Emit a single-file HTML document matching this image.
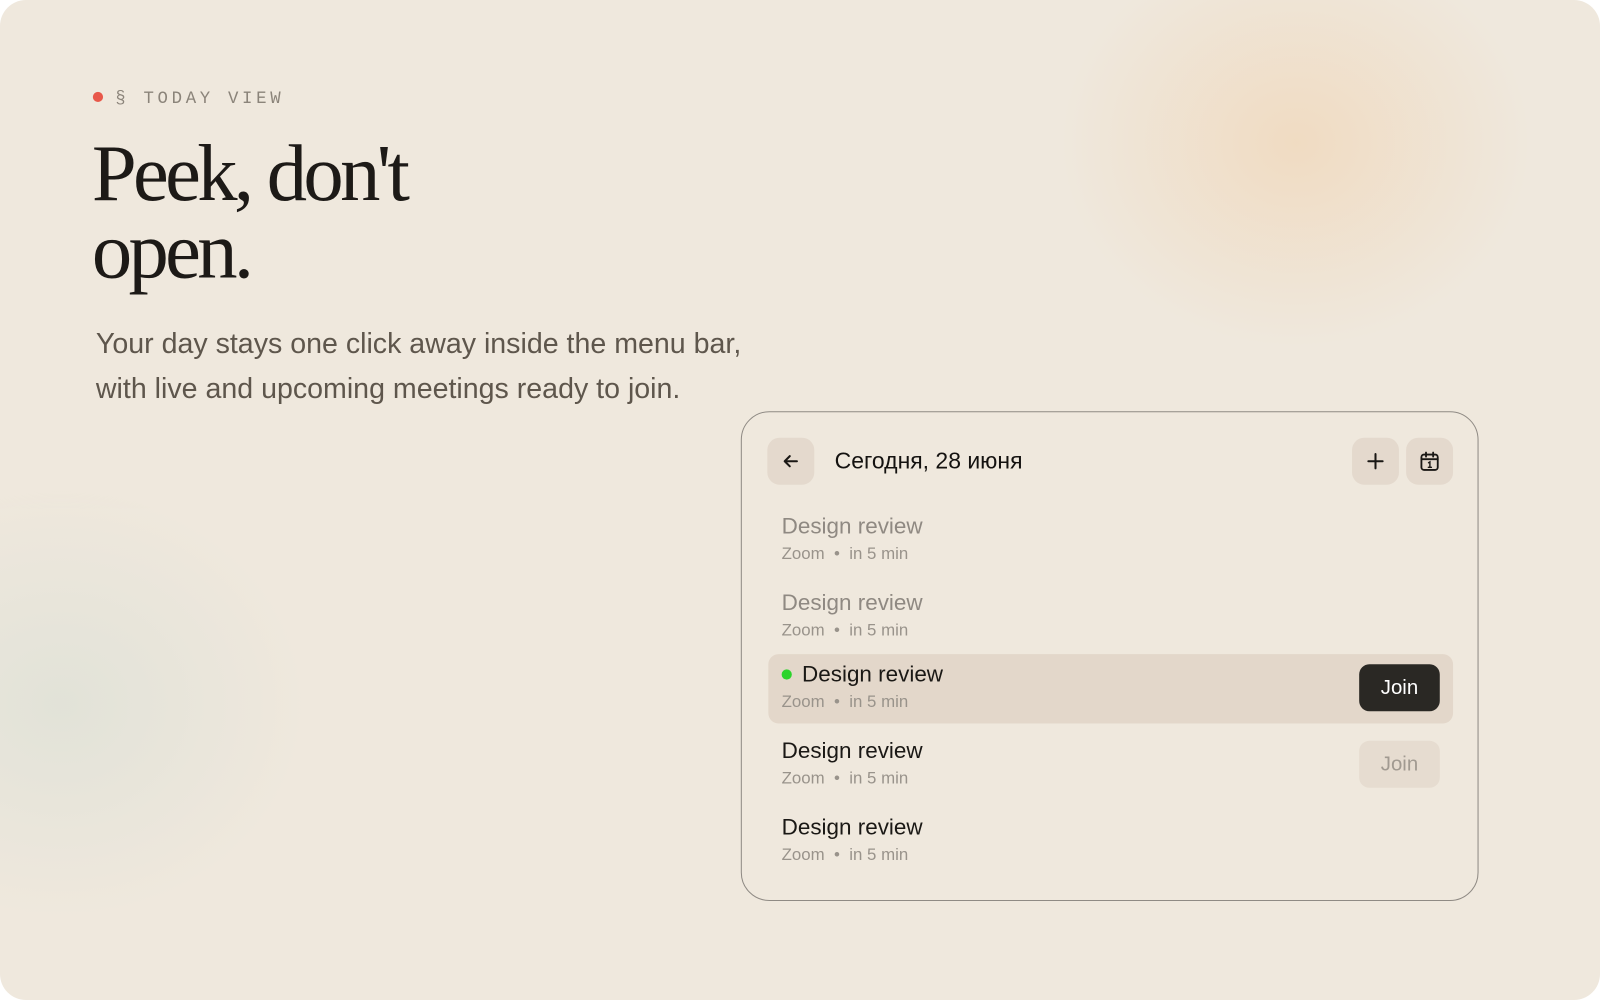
<!DOCTYPE html>
<html><head><meta charset="utf-8"><style>
*{margin:0;padding:0;box-sizing:border-box}
body{width:1600px;height:1000px;background:#fff;overflow:hidden;font-family:"Liberation Sans",sans-serif}
.page{position:absolute;left:0;top:0;width:1600px;height:1000px;border-radius:26px;background:#efe8dd;overflow:hidden}
.wrap{position:absolute;left:0;top:0;width:1568px;height:980px;transform:scale(1.0204);transform-origin:0 0}
.glow1{position:absolute;left:1040px;top:-60px;width:460px;height:400px;border-radius:50%;background:radial-gradient(closest-side,rgba(240,215,185,.75),rgba(240,215,185,0))}
.glow2{position:absolute;left:-180px;top:480px;width:480px;height:420px;border-radius:50%;background:radial-gradient(closest-side,rgba(220,224,214,.7),rgba(220,224,214,0))}
.eyebrow{position:absolute;left:91px;top:88px;font-family:"Liberation Mono",monospace;font-size:17px;letter-spacing:3.6px;color:#8b847a}
.eyebrow .dot{display:inline-block;width:10px;height:10px;border-radius:50%;background:#e8584a;margin-right:12px;vertical-align:1px}
h1{position:absolute;left:90px;top:133px;font-family:"Liberation Serif",serif;font-weight:400;font-size:79px;line-height:76px;letter-spacing:-3.6px;color:#1d1a17}
.lead{position:absolute;left:94px;top:315px;font-size:28px;line-height:44px;color:#5e564c}
.card{position:absolute;left:726px;top:403px;width:723px;height:480px;border:1px solid #8f8a84;border-radius:28px}
.btn{position:absolute;top:25px;width:46px;height:46px;border-radius:12px;background:#e4d9cd;display:flex;align-items:center;justify-content:center}
.title{position:absolute;left:91px;top:35px;font-size:22.5px;color:#141210}
.row{position:absolute;left:26px;width:671px;height:68px;border-radius:10px}
.row .t{position:absolute;left:13px;top:7px;font-size:22px;color:#1a1815}
.row .s{position:absolute;left:13px;top:38px;font-size:16.5px;color:#99938b}
.row.dim .t{color:#8f8982}
.join{position:absolute;right:13px;top:10px;width:79px;height:46px;border-radius:10px;font-size:20px;display:flex;align-items:center;justify-content:center}
</style></head><body><div class="page"><div class="wrap">
<div class="glow1"></div><div class="glow2"></div>
<div class="eyebrow"><span class="dot"></span>§ TODAY VIEW</div>
<h1>Peek, don't<br>open.</h1>
<div class="lead">Your day stays one click away inside the menu bar,<br>with live and upcoming meetings ready to join.</div>
<div class="card">
 <div class="btn" style="left:25px"><svg width="20" height="20" viewBox="0 0 20 20" fill="none" stroke="#1a1815" stroke-width="2" stroke-linecap="round" stroke-linejoin="round"><path d="M16 10H4M9 5l-5 5 5 5"/></svg></div>
 <div class="title">Сегодня, 28 июня</div>
 <div class="btn" style="left:598px"><svg width="20" height="20" viewBox="0 0 20 20" fill="none" stroke="#1a1815" stroke-width="2" stroke-linecap="round"><path d="M10 3v14M3 10h14"/></svg></div>
 <div class="btn" style="left:651px"><svg width="22" height="22" viewBox="0 0 22 22" fill="none" stroke="#1a1815" stroke-width="1.8" stroke-linecap="round"><rect x="3" y="4.5" width="16" height="15" rx="2.5"/><path d="M3 9h16M7.5 2.5v4M14.5 2.5v4"/><path d="M10 12.5l1.3-.8v5.3M9.8 17h3" stroke-width="1.4"/></svg></div>
 <div class="row dim" style="top:92px"><div class="t">Design review</div><div class="s">Zoom &nbsp;•&nbsp; in 5 min</div></div>
 <div class="row dim" style="top:167px"><div class="t">Design review</div><div class="s">Zoom &nbsp;•&nbsp; in 5 min</div></div>
 <div class="row" style="top:237px;background:#e3d7ca"><div class="t" style="left:33px"><span style="position:absolute;left:-20px;top:8px;width:10px;height:10px;border-radius:50%;background:#2bd42b"></span>Design review</div><div class="s">Zoom &nbsp;•&nbsp; in 5 min</div><div class="join" style="background:#2a2824;color:#fff">Join</div></div>
 <div class="row" style="top:312px"><div class="t">Design review</div><div class="s">Zoom &nbsp;•&nbsp; in 5 min</div><div class="join" style="background:#e6dcd0;color:#a19a91">Join</div></div>
 <div class="row" style="top:387px"><div class="t">Design review</div><div class="s">Zoom &nbsp;•&nbsp; in 5 min</div></div>
</div>
</div></div></body></html>
